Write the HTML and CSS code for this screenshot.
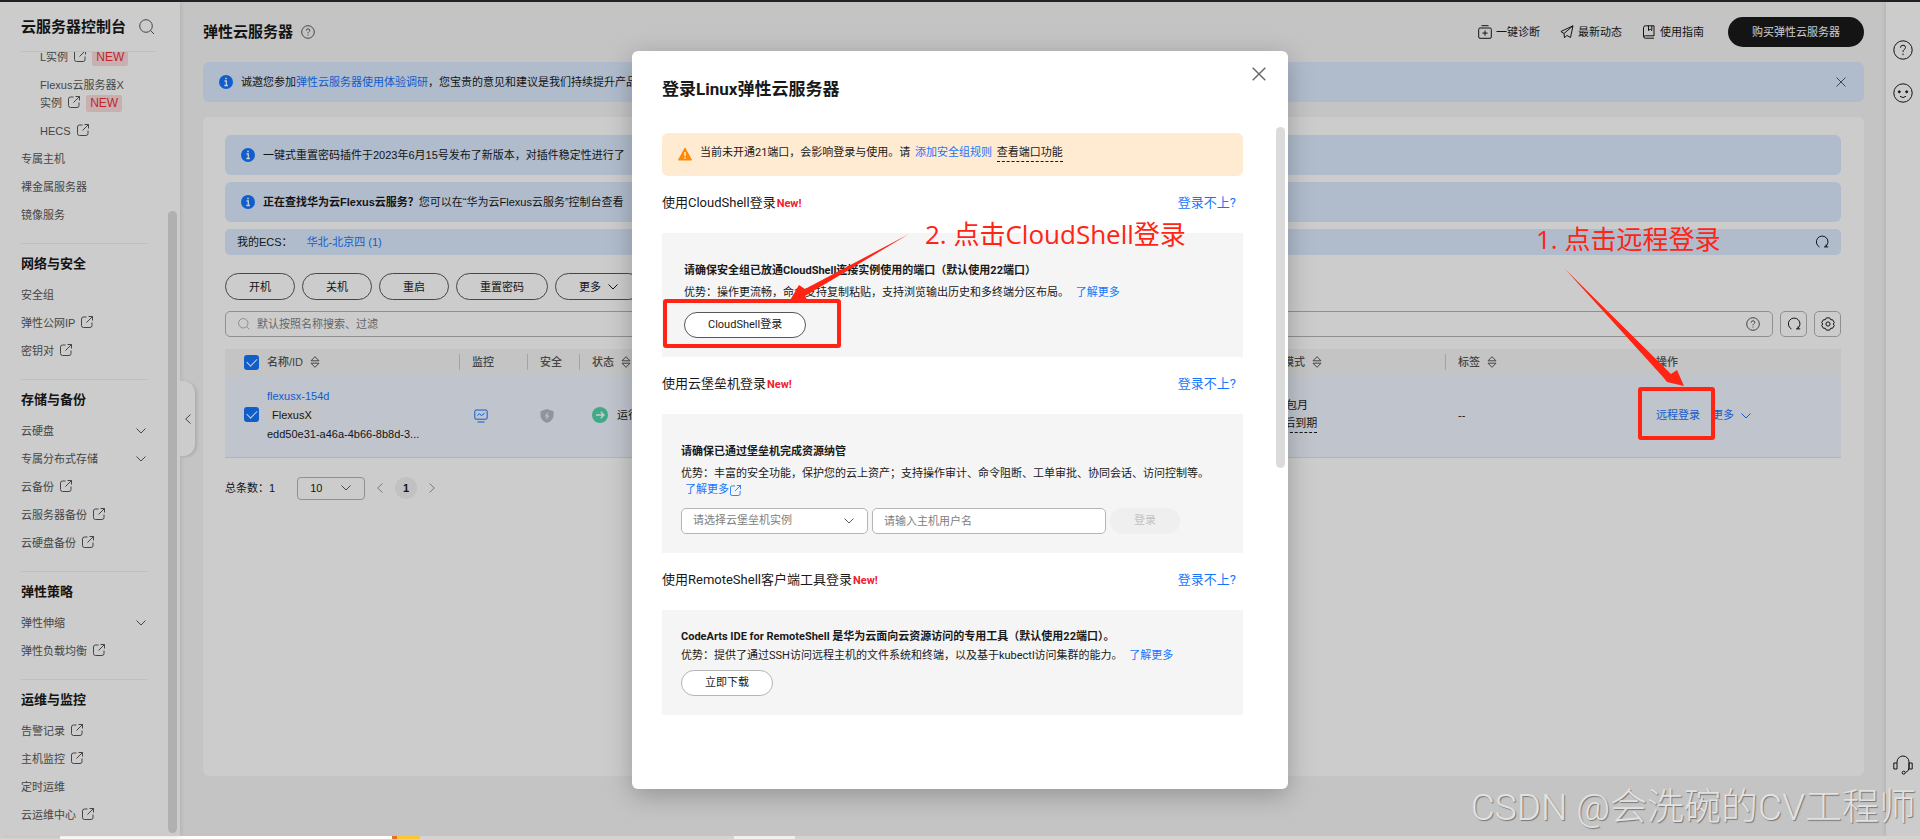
FILE: index.html
```html
<!DOCTYPE html>
<html lang="zh-CN">
<head>
<meta charset="utf-8">
<title>弹性云服务器</title>
<link rel="stylesheet" href="styles.css">
</head>
<body>
<svg class="defs" aria-hidden="true">
  <symbol id="i-share" viewBox="0 0 12 12"><path d="M5.500 1H2.500Q.5 1 .5 3V9.500Q.5 11.500 2.500 11.500H9Q11 11.500 11 9.500V6.500M7.500.5H11.500V4.500M11.500.5L5.500 6.500"/></symbol>
  <symbol id="i-search" viewBox="0 0 16 16"><circle cx="7" cy="7" r="6.300"/><path d="M11.500 11.500L15 15"/></symbol>
  <symbol id="i-down" viewBox="0 0 10 6"><path d="M.5.5L5 5L9.500.5"/></symbol>
  <symbol id="i-left" viewBox="0 0 6 10"><path d="M5.500.5L.7 5L5.500 9.500"/></symbol>
  <symbol id="i-right" viewBox="0 0 6 10"><path d="M.5.5L5.300 5L.5 9.500"/></symbol>
  <symbol id="i-close" viewBox="0 0 10 10"><path d="M.5.5L9.500 9.500M9.500.5L.5 9.500"/></symbol>
  <symbol id="i-help" viewBox="0 0 14 14"><circle cx="7" cy="7" r="6.300"/><path d="M5.200 5.600Q5.200 3.800 7 3.800T8.800 5.500Q8.800 6.300 7.800 6.900Q7 7.400 7 8.300M7 9.500V10.500"/></symbol>
  <symbol id="i-info" viewBox="0 0 14 14"><circle cx="7" cy="7" r="7" fill="#1476ff" stroke="none"/><path d="M5.500 6H7.300V10.300M5.300 10.500H9M6.200 3.500H7.800" stroke="#fff" stroke-width="1.300"/></symbol>
  <symbol id="i-refresh" viewBox="0 0 14 14"><path d="M4.500 12A5.800 5.800 0 1 1 10.500 11.600M9 11.900H13.200M11 9.500V12"/></symbol>
  <symbol id="i-sort" viewBox="0 0 10 12"><path d="M5 .7L9 4.800H1ZM1 7.200H9L5 11.300Z"/></symbol>
</svg>

<div class="topbar"></div>
<div class="app">
  <aside class="sidebar">
    <div class="side-head"><h2>云服务器控制台</h2><button class="plain" aria-label="搜索"><svg class="s16"><use href="#i-search"/></svg></button></div>
    <nav class="side-nav">
      <ul class="first">
        <li class="sub"><a href="#">L实例 <svg class="s12"><use href="#i-share"/></svg> <span class="new">NEW</span></a></li>
        <li class="sub"><a href="#">Flexus云服务器X<br>实例 <svg class="s12"><use href="#i-share"/></svg> <span class="new">NEW</span></a></li>
        <li class="sub"><a href="#">HECS <svg class="s12"><use href="#i-share"/></svg></a></li>
        <li><a href="#">专属主机</a></li>
        <li><a href="#">裸金属服务器</a></li>
        <li><a href="#">镜像服务</a></li>
      </ul>
      <h3>网络与安全</h3>
      <ul>
        <li><a href="#">安全组</a></li>
        <li><a href="#">弹性公网IP <svg class="s12"><use href="#i-share"/></svg></a></li>
        <li><a href="#">密钥对 <svg class="s12"><use href="#i-share"/></svg></a></li>
      </ul>
      <h3>存储与备份</h3>
      <ul>
        <li class="fold"><a href="#">云硬盘</a><svg class="chev"><use href="#i-down"/></svg></li>
        <li class="fold"><a href="#">专属分布式存储</a><svg class="chev"><use href="#i-down"/></svg></li>
        <li><a href="#">云备份 <svg class="s12"><use href="#i-share"/></svg></a></li>
        <li><a href="#">云服务器备份 <svg class="s12"><use href="#i-share"/></svg></a></li>
        <li><a href="#">云硬盘备份 <svg class="s12"><use href="#i-share"/></svg></a></li>
      </ul>
      <h3>弹性策略</h3>
      <ul>
        <li class="fold"><a href="#">弹性伸缩</a><svg class="chev"><use href="#i-down"/></svg></li>
        <li><a href="#">弹性负载均衡 <svg class="s12"><use href="#i-share"/></svg></a></li>
      </ul>
      <h3>运维与监控</h3>
      <ul>
        <li><a href="#">告警记录 <svg class="s12"><use href="#i-share"/></svg></a></li>
        <li><a href="#">主机监控 <svg class="s12"><use href="#i-share"/></svg></a></li>
        <li><a href="#">定时运维</a></li>
        <li><a href="#">云运维中心 <svg class="s12"><use href="#i-share"/></svg></a></li>
      </ul>
    </nav>
    <div class="side-thumb"></div>
    <button class="collapse" aria-label="收起"><svg class="arrow"><use href="#i-left"/></svg></button>
  </aside>

  <main class="main">
    <header class="page-head">
      <h1>弹性云服务器</h1><svg class="s14 muted"><use href="#i-help"/></svg>
      <div class="head-links">
        <a href="#"><svg class="s14" viewBox="0 0 14 14"><path d="M3.500.7H10.500M2 3H12Q13.300 3 13.300 4.300V12Q13.300 13.300 12 13.300H2Q.7 13.300.7 12V4.300Q.7 3 2 3ZM7 5.500V10.700M4.400 8.100H9.600"/></svg>一键诊断</a>
        <a href="#"><svg class="s14" viewBox="0 0 14 14"><path d="M13 .8L.9 6.500L4 8.500L4.500 12.800L6.800 10.400L10.500 12.500ZM13 .8L4 8.500"/></svg>最新动态</a>
        <a href="#"><svg class="s14" viewBox="0 0 14 14"><path d="M12 11V.8H3.500Q1.500.8 1.500 2.800V11.500Q1.500 13.200 3.500 13.200H12M12 10.800H3.500Q1.600 10.800 1.600 12M6.500.8V5.500L8.200 4.200L9.800 5.500V.8"/></svg>使用指南</a>
      </div>
      <button class="buy">购买弹性云服务器</button>
    </header>
    <div class="notice top-notice"><svg class="s14"><use href="#i-info"/></svg><p>诚邀您参加<a href="#">弹性云服务器使用体验调研</a>，您宝贵的意见和建议是我们持续提升产品</p><button class="plain close-sm" aria-label="关闭"><svg class="s10"><use href="#i-close"/></svg></button></div>
    <section class="panel">
      <div class="notice"><svg class="s14"><use href="#i-info"/></svg><p>一键式重置密码插件于2023年6月15号发布了新版本，对插件稳定性进行了</p></div>
      <div class="notice"><svg class="s14"><use href="#i-info"/></svg><p><b>正在查找华为云Flexus云服务？</b>您可以在“华为云Flexus云服务”控制台查看</p></div>
      <div class="myecs"><span>我的ECS：</span><a href="#">华北-北京四 (1)</a><button class="plain" aria-label="刷新"><svg class="s14"><use href="#i-refresh"/></svg></button></div>
      <div class="actions">
        <button class="pill">开机</button><button class="pill">关机</button><button class="pill">重启</button><button class="pill">重置密码</button><button class="pill">更多<svg class="chev"><use href="#i-down"/></svg></button>
      </div>
      <div class="filter">
        <div class="search"><svg class="s12 faint" viewBox="0 0 16 16"><use href="#i-search"/></svg><input type="text" aria-label="搜索" placeholder="默认按照名称搜索、过滤"><svg class="s14 muted"><use href="#i-help"/></svg></div>
        <button class="square" aria-label="刷新"><svg class="s14"><use href="#i-refresh"/></svg></button>
        <button class="square" aria-label="设置"><svg class="s14" viewBox="0 0 14 14"><path d="M5.300.9H8.700L9.600 2.700L11.700 2.800L13.300 5.700L12.200 7L13.300 8.400L11.700 11.200L9.600 11.300L8.700 13.100H5.300L4.400 11.300L2.300 11.200L.7 8.400L1.800 7L.7 5.700L2.300 2.800L4.400 2.700Z"/><circle cx="7" cy="7" r="2.100"/></svg></button>
      </div>
      <table class="servers">
        <colgroup><col class="c-name"><col class="c-mon"><col class="c-sec"><col class="c-state"><col class="c-bill"><col class="c-tag"><col class="c-tag"></colgroup>
        <thead><tr>
          <th><label class="pick"><input type="checkbox" checked aria-label="全选"><span>名称/ID</span><svg class="sort"><use href="#i-sort"/></svg></label></th>
          <th>监控</th><th>安全</th><th>状态<svg class="sort"><use href="#i-sort"/></svg></th><th>计费模式<svg class="sort"><use href="#i-sort"/></svg></th><th>标签<svg class="sort"><use href="#i-sort"/></svg></th><th>操作</th>
        </tr></thead>
        <tbody><tr>
          <td><div class="pick"><input type="checkbox" checked aria-label="选择 flexusx-154d"><div class="ident"><a href="#">flexusx-154d</a><span class="kind">FlexusX</span><span>edd50e31-a46a-4b66-8b8d-3...</span></div></div></td>
          <td><svg class="s14 mon" viewBox="0 0 14 14"><path d="M2 1H12Q13.200 1 13.200 2.200V9Q13.200 10.200 12 10.200H2Q.8 10.200.8 9V2.200Q.8 1 2 1ZM3.500 13H10.500M3.300 6.500L5.300 4.700L7.500 6.500L10.500 4.300"/></svg></td>
          <td><svg class="s14" viewBox="0 0 14 14"><path d="M7 0L13.500 2.300V7Q13 11.500 7 14Q1 11.500.5 7V2.300Z" fill="#b6b9c1" stroke="none"/><path d="M8 3L4.600 7.500H6.600L6 11L9.400 6.500H7.400Z" fill="#edf0f6" stroke="none"/></svg></td>
          <td><span class="state"><svg class="s16" viewBox="0 0 16 16"><circle cx="8" cy="8" r="8" fill="#50d4ab" stroke="none"/><path d="M4 8H12M8.700 4.700L12 8L8.700 11.300" stroke="#fff" stroke-width="1.300"/></svg>运行中</span></td>
          <td><div class="bill"><span>包年/包月</span><span class="dash">29天后到期</span></div></td>
          <td>--</td>
          <td><div class="ops"><a href="#">远程登录</a><a href="#">更多<svg class="chev"><use href="#i-down"/></svg></a></div></td>
        </tr></tbody>
      </table>
      <div class="pager"><span>总条数：1</span>
        <span class="size"><select aria-label="每页条数"><option>10</option></select><svg class="chev"><use href="#i-down"/></svg></span>
        <button class="plain faint" aria-label="上一页"><svg class="arrow"><use href="#i-left"/></svg></button><button class="current">1</button><button class="plain faint" aria-label="下一页"><svg class="arrow"><use href="#i-right"/></svg></button>
      </div>
    </section>
  </main>

  <aside class="rail">
    <button class="plain" aria-label="帮助"><svg class="s20" viewBox="0 0 20 20"><circle cx="10" cy="10" r="9.200"/><path d="M7.500 7.700Q7.500 5.200 10 5.200T12.500 7.500Q12.500 8.700 11.200 9.500Q10 10.300 10 12M10 13.500V15.200"/></svg></button>
    <button class="plain" aria-label="反馈"><svg class="s20" viewBox="0 0 20 20"><circle cx="10" cy="10" r="9.200"/><path d="M7 13.300Q10 15.800 13 13.300"/><circle cx="6.300" cy="8.800" r="1" fill="currentColor"/><circle cx="13.700" cy="8.800" r="1" fill="currentColor"/></svg></button>
    <button class="plain support" aria-label="客服"><svg class="s20" viewBox="0 0 20 20"><path d="M4 8V7A6 6 0 0 1 16 7V13Q16 16 12.500 17.500M.8 8H4V14H.8ZM16 8H19.200V14H16Z"/><circle cx="10.700" cy="17.700" r="1.500"/></svg></button>
  </aside>
</div>
<div class="edge"></div>
<div class="mask"></div>

<div class="modal" role="dialog" aria-labelledby="dlg">
  <button class="plain modal-close" aria-label="关闭"><svg class="s14"><use href="#i-close"/></svg></button>
  <h2 id="dlg">登录Linux弹性云服务器</h2>
  <div class="warn"><svg class="s14" viewBox="0 0 14 14"><path d="M7 1L13.500 13H.5Z" fill="#ff8800" stroke="#ff8800" stroke-linejoin="round"/><path d="M7 5V9.200M7 10.300V11.800" stroke="#fff" stroke-width="1.300"/></svg><p>当前未开通21端口，会影响登录与使用。请 <a href="#">添加安全组规则</a> <span class="dash">查看端口功能</span></p></div>

  <div class="way"><h3>使用CloudShell登录<em>New!</em></h3><a href="#">登录不上?</a></div>
  <section class="box shell">
    <h4>请确保安全组已放通CloudShell连接实例使用的端口（默认使用22端口）</h4>
    <p>优势：操作更流畅，命令支持复制粘贴，支持浏览输出历史和多终端分区布局。 <a href="#">了解更多</a></p>
    <button class="pill">CloudShell登录</button>
  </section>

  <div class="way"><h3>使用云堡垒机登录<em>New!</em></h3><a href="#">登录不上?</a></div>
  <section class="box bastion">
    <h4>请确保已通过堡垒机完成资源纳管</h4>
    <p>优势：丰富的安全功能，保护您的云上资产；支持操作审计、命令阻断、工单审批、协同会话、访问控制等。</p>
    <a class="more" href="#">了解更多<svg class="s12" viewBox="0 0 12 12"><use href="#i-share"/></svg></a>
    <form class="login">
      <span class="size"><select aria-label="云堡垒机实例"><option>请选择云堡垒机实例</option></select><svg class="chev"><use href="#i-down"/></svg></span>
      <input type="text" aria-label="主机用户名" placeholder="请输入主机用户名">
      <button class="pill" type="button" disabled>登录</button>
    </form>
  </section>

  <div class="way"><h3>使用RemoteShell客户端工具登录<em>New!</em></h3><a href="#">登录不上?</a></div>
  <section class="box remote">
    <h4>CodeArts IDE for RemoteShell 是华为云面向云资源访问的专用工具（默认使用22端口）。</h4>
    <p>优势：提供了通过SSH访问远程主机的文件系统和终端，以及基于kubectl访问集群的能力。 <a href="#">了解更多</a></p>
    <button class="pill">立即下载</button>
  </section>
  <div class="modal-thumb"></div>
</div>

<svg class="marks" viewBox="0 0 1920 839" aria-hidden="true">
  <rect x="665" y="301" width="174" height="45" rx="1"/>
  <rect x="1640" y="389" width="73" height="49" rx="1"/>
  <path d="M909 234L805 289L799 285L789 302L808 301L805 296Z"/>
  <path d="M1565 269L1671 374L1677 370L1684 386L1667 382L1663 377Z"/>
</svg>
<div class="callout one">1. 点击远程登录</div>
<div class="callout two">2. 点击CloudShell登录</div>
<div class="credit">CSDN @会洗碗的CV工程师</div>
</body>
</html>
```
FILE: styles.css
```css
* { box-sizing: border-box; }
body {
  margin: 0;
  min-height: 100vh;
  display: flex;
  flex-direction: column;
  position: relative;
  overflow: hidden;
  font: 11px/18px "Liberation Sans", "Noto Sans CJK SC", sans-serif;
  color: #191919;
  background: #f5f5f5;
}
h1, h2, h3, h4, p, ul { margin: 0; padding: 0; }
ul { list-style: none; }
a { color: #1476ff; text-decoration: none; }
button, input, select { font: inherit; color: inherit; }
button { cursor: pointer; }
svg { fill: none; stroke: currentColor; stroke-width: 1; flex: none; }
.defs { position: absolute; width: 0; height: 0; }
.plain { border: 0; background: none; padding: 0; display: flex; }
.s10 { width: 10px; height: 10px; }
.s12 { width: 12px; height: 12px; }
.s14 { width: 14px; height: 14px; }
.s16 { width: 16px; height: 16px; }
.s20 { width: 20px; height: 20px; }
.chev { width: 10px; height: 6px; }
.arrow { width: 6px; height: 10px; }
.sort { width: 10px; height: 12px; margin-left: 7px; vertical-align: -2px; }
.muted { color: #575757; }
.faint { color: #999; }

.topbar { height: 2px; background: #1f2226; }
.app { flex: 1; display: flex; min-height: 0; }
.edge {
  height: 3px;
  background: linear-gradient(90deg, #d5d5d5 60px, #fff 60px 392px, #e8731a 392px 397px, #fbc834 397px 420px, #d3d3d3 420px 734px, #f0f0f0 734px 795px, #d3d3d3 795px);
}
.mask { position: absolute; inset: 2px 0 3px; background: rgba(0, 0, 0, .2); }

/* sidebar */
.sidebar {
  position: relative;
  width: 180px;
  flex: none;
  display: flex;
  flex-direction: column;
  padding-left: 21px;
  background: #fff;
  box-shadow: 0 0 5px rgba(0, 0, 0, .15);
  z-index: 0;
}
.side-head {
  display: flex;
  align-items: center;
  gap: 13px;
  height: 50px;
  width: 135px;
  flex: none;
  border-bottom: 1px solid #f0f0f0;
}
.side-head h2 { font-size: 15px; line-height: 20px; }
.side-head svg { color: #575757; }
.side-nav { flex: 1; min-height: 0; overflow: hidden; width: 127px; color: #575757; }
.side-nav .first { margin-top: -9px; }
.side-nav li { padding: 5px 0; }
.side-nav .sub { padding-left: 19px; }
.side-nav a { color: inherit; }
.side-nav .s12 { margin: 0 3px; vertical-align: -1px; }
.side-nav h3 {
  margin-top: 14px;
  padding: 10px 0 7px;
  border-top: 1px solid #f0f0f0;
  font-size: 13px;
  line-height: 20px;
  color: #191919;
}
.new { display: inline-block; padding: 0 4px; font-size: 12px; line-height: 17px; border-radius: 2px; background: #fcdcdc; color: #f0303c; }
.fold { display: flex; align-items: center; justify-content: space-between; }
.fold .chev { margin-right: 2px; }
.side-thumb { position: absolute; right: 3px; top: 209px; bottom: 3px; width: 9px; border-radius: 5px; background: #dcdcdc; }
.collapse {
  position: absolute;
  left: 100%;
  top: 379px;
  width: 15px;
  height: 75px;
  padding: 0;
  display: flex;
  align-items: center;
  justify-content: center;
  border: 0;
  border-radius: 0 12px 12px 0;
  background: #fff;
  box-shadow: 2px 1px 3px rgba(0, 0, 0, .12);
  color: #575757;
}

/* main column */
.main { flex: 1; min-width: 0; display: flex; flex-direction: column; padding: 0 22px 60px 23px; }
.page-head { display: flex; align-items: center; height: 60px; flex: none; }
h1 { font-size: 15px; line-height: 20px; margin-right: 8px; }
.head-links { display: flex; gap: 20px; margin-left: auto; margin-right: 24px; }
.head-links a { display: flex; align-items: center; gap: 4px; color: inherit; }
.buy { height: 30px; padding: 0 24px; border: 0; border-radius: 15px; background: #191919; color: #fff; }
.notice { display: flex; align-items: center; gap: 8px; height: 40px; padding: 0 18px 0 16px; border-radius: 6px; background: #dcebff; white-space: nowrap; flex: none; }
.top-notice { margin-bottom: 15px; }
.close-sm { margin-left: auto; color: #575757; }
.panel { flex: 1; display: flex; flex-direction: column; gap: 7px; padding: 18px 23px 0 22px; border-radius: 6px; background: #fff; }
.myecs { display: flex; align-items: center; height: 26px; padding: 0 12px; gap: 14px; border-radius: 5px; background: #dcebff; }
.myecs button { margin-left: auto; }
.actions { display: flex; gap: 7px; margin-top: 11px; }
.pill {
  height: 27px;
  padding: 0 23px;
  border: 1px solid #575757;
  border-radius: 14px;
  background: #fff;
  line-height: 18px;
}
.actions .chev { margin-left: 7px; vertical-align: 1px; }
.filter { display: flex; gap: 7px; margin-top: 4px; }
.search { flex: 1; display: flex; align-items: center; gap: 7px; height: 26px; padding: 0 12px; border: 1px solid #b5b5b5; border-radius: 5px; }
.search input { flex: 1; border: 0; outline: 0; padding: 0; background: none; }
::placeholder { color: #808080; opacity: 1; }
.square { width: 27px; height: 26px; padding: 0; display: flex; align-items: center; justify-content: center; border: 1px solid #b5b5b5; border-radius: 5px; background: none; }

.servers { width: 100%; margin-top: 5px; table-layout: fixed; border-collapse: collapse; }
.c-name { width: 234px; }
.c-mon { width: 68px; }
.c-sec { width: 52px; }
.c-bill { width: 197px; }
.c-tag { width: 198px; }
.servers th, .servers td { padding: 0 0 0 13px; text-align: left; white-space: nowrap; }
.servers th { height: 26px; background: linear-gradient(#ccc, #ccc) left center / 1px 16px no-repeat #f5f5f5; color: #575757; font-weight: 500; }
.servers th:first-child, .servers th:last-child { background: #f5f5f5; }
.servers th:first-child, .servers td:first-child { padding-left: 19px; }
.servers td { height: 82px; padding-bottom: 2px; background: #f0f5ff; border-bottom: 1px solid #dfe1e6; }
.pick { display: flex; align-items: center; }
.pick input {
  appearance: none;
  width: 15px;
  height: 15px;
  margin: 0 8px 0 0;
  border-radius: 3px;
  background: #1476ff;
  display: grid;
  place-items: center;
}
.pick input::before { content: ""; width: 9px; height: 5px; margin-bottom: 3px; border: solid #fff; border-width: 0 0 1px 1px; transform: rotate(-45deg); }
.ident { display: flex; flex-direction: column; align-items: flex-start; gap: 1px; }
.kind { padding: 0 5px; border-radius: 2px; background: #f5f5f5; }
.mon { color: #1476ff; margin-left: 2px; }
.servers td svg { vertical-align: middle; }
.state { display: flex; align-items: center; gap: 9px; }
.bill { display: flex; flex-direction: column; align-items: flex-start; }
.dash { border-bottom: 1px dashed #191919; }
.ops { display: flex; gap: 12px; }
.ops .chev { margin-left: 7px; }

.pager { display: flex; align-items: center; margin-top: 12px; }
.size { position: relative; display: flex; align-items: center; }
.size select { appearance: none; width: 100%; border: 1px solid #b5b5b5; border-radius: 4px; background: none; outline: 0; }
.size .chev { position: absolute; right: 14px; pointer-events: none; color: #575757; }
.pager .size { width: 68px; margin: 0 12px 0 22px; }
.pager select { height: 23px; padding: 0 12px; }
.current { width: 22px; height: 22px; margin: 0 12px; padding: 0; border: 0; border-radius: 50%; background: #f2f2f2; font-weight: 700; }

.rail { width: 34px; flex: none; display: flex; flex-direction: column; align-items: center; gap: 23px; padding: 38px 0 61px; background: #fff; box-shadow: 0 0 5px rgba(0, 0, 0, .15); }
.support { margin-top: auto; }

/* login dialog */
.modal {
  position: absolute;
  top: 51px;
  bottom: 50px;
  left: 50%;
  width: 656px;
  margin-left: -328px;
  padding: 25px 45px 0 30px;
  border-radius: 6px;
  background: #fff;
  box-shadow: 0 6px 26px rgba(0, 0, 0, .25);
  font-family: Roboto, "Noto Sans CJK SC", sans-serif;
}
.modal-close { position: absolute; right: 22px; top: 16px; color: #666; }
.modal h2 { font-size: 17px; line-height: 26px; }
.warn { display: flex; align-items: flex-start; gap: 8px; height: 43px; margin-top: 31px; padding: 11px 16px; border-radius: 6px; background: #ffead2; }
.warn .s14 { margin-top: 3px; }
.warn a { margin: 0 2px; }
.warn .dash { padding-bottom: 2px; }
.way { display: flex; justify-content: space-between; align-items: center; padding: 17px 7px 20px 0; font-size: 13px; line-height: 20px; }
.way h3 { font-size: 13px; font-weight: 400; }
.way em { margin-left: 1px; font: 700 11px/18px Roboto, sans-serif; color: #f0202e; }
.box { background: #f5f5f5; }
.box h4 { font-size: 11px; line-height: 18px; }
.box p a { margin-left: 4px; }
.shell { height: 124px; padding: 29px 22px 0; }
.shell p { margin: 4px 0 10px; }
.shell .pill { height: 26px; }
.bastion { height: 139px; padding: 29px 19px 0; }
.bastion p { margin-top: 4px; white-space: nowrap; }
.more { display: flex; align-items: center; gap: 1px; padding-left: 4px; line-height: 14px; }
.more svg { width: 11px; height: 11px; }
.login { display: flex; gap: 4px; margin-top: 11px; }
.login .size { width: 187px; }
.login select, .login input { height: 26px; padding: 0 11px; border: 1px solid #b5b5b5; border-radius: 5px; background: #fff; outline: 0; color: #808080; }
.login input { width: 234px; }
.login .pill { height: 26px; padding: 0 24px; border: 0; background: #efefef; color: #c2c2c2; }
.remote { height: 105px; padding: 18px 19px 0; }
.remote p { margin: 1px 0 5px; }
.remote .pill { height: 26px; border-color: #b5b5b5; }
.modal-thumb { position: absolute; right: 3px; top: 76px; width: 9px; height: 341px; border-radius: 5px; background: #dbdbdb; }

/* annotations */
.marks { position: absolute; left: 0; top: 0; width: 1920px; height: 839px; pointer-events: none; }
.marks rect { stroke: #ff2414; stroke-width: 4; }
.marks path { stroke: none; fill: #ff2414; }
.callout { position: absolute; font: 26px/36px "Open Sans", "Noto Sans CJK SC", sans-serif; color: #ff2414; white-space: nowrap; }
.one { left: 1536px; top: 221px; }
.two { left: 925px; top: 216px; }
.credit { position: absolute; right: 4px; top: 784px; font: 37px/48px Roboto, "Noto Sans CJK SC", sans-serif; font-weight: 300; color: #e2e2e2; text-shadow: 1px 1px 1px #777; white-space: nowrap; }
```
